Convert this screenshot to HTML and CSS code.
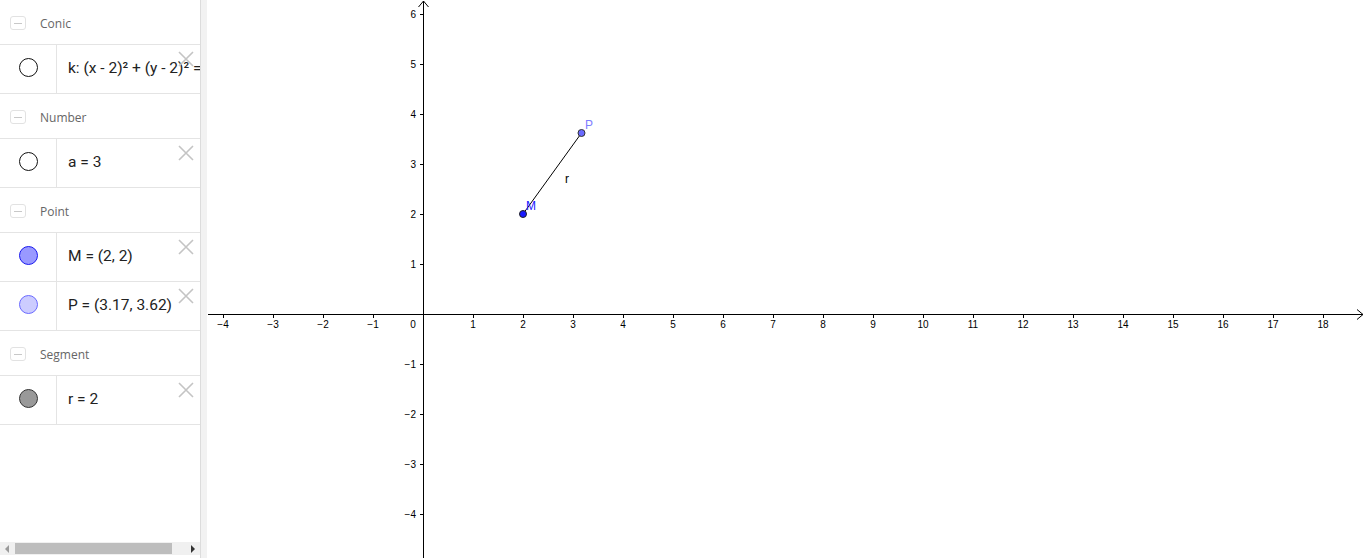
FILE: index.html
```html
<!DOCTYPE html>
<html>
<head>
<meta charset="utf-8">
<link rel="stylesheet" href="styles.css">
</head>
<body>
<div class="app">
  <aside class="panel">
    <div class="list">
      <div class="group-head"><span class="toggle"><span class="toggle-bar"></span></span><span class="group-name">Conic</span></div>
      <div class="item">
        <div class="marker"><span class="dot dot-empty"></span></div>
        <div class="formula">k: (x - 2)² + (y - 2)² = 9</div>
        <span class="del"><svg width="16" height="16" viewBox="0 0 16 16"><path d="M1 1L15 15M15 1L1 15" stroke="#c4c4c4" stroke-width="1.6" fill="none"/></svg></span>
      </div>
      <div class="group-head"><span class="toggle"><span class="toggle-bar"></span></span><span class="group-name">Number</span></div>
      <div class="item">
        <div class="marker"><span class="dot dot-empty"></span></div>
        <div class="formula">a = 3</div>
        <span class="del"><svg width="16" height="16" viewBox="0 0 16 16"><path d="M1 1L15 15M15 1L1 15" stroke="#c4c4c4" stroke-width="1.6" fill="none"/></svg></span>
      </div>
      <div class="group-head"><span class="toggle"><span class="toggle-bar"></span></span><span class="group-name">Point</span></div>
      <div class="item">
        <div class="marker"><span class="dot dot-m"></span></div>
        <div class="formula">M = (2, 2)</div>
        <span class="del"><svg width="16" height="16" viewBox="0 0 16 16"><path d="M1 1L15 15M15 1L1 15" stroke="#c4c4c4" stroke-width="1.6" fill="none"/></svg></span>
      </div>
      <div class="item">
        <div class="marker"><span class="dot dot-p"></span></div>
        <div class="formula">P = (3.17, 3.62)</div>
        <span class="del"><svg width="16" height="16" viewBox="0 0 16 16"><path d="M1 1L15 15M15 1L1 15" stroke="#c4c4c4" stroke-width="1.6" fill="none"/></svg></span>
      </div>
      <div class="group-head"><span class="toggle"><span class="toggle-bar"></span></span><span class="group-name">Segment</span></div>
      <div class="item">
        <div class="marker"><span class="dot dot-r"></span></div>
        <div class="formula">r = 2</div>
        <span class="del"><svg width="16" height="16" viewBox="0 0 16 16"><path d="M1 1L15 15M15 1L1 15" stroke="#c4c4c4" stroke-width="1.6" fill="none"/></svg></span>
      </div>
    </div>
    <div class="hscroll">
      <span class="arrow arrow-left"></span>
      <span class="thumb"></span>
      <span class="arrow arrow-right"></span>
    </div>
  </aside>
  <div class="splitter"></div>
  <main class="graphics">
    <svg class="plot" width="1159" height="558" viewBox="207 0 1159 558">
      <g stroke="#000" stroke-width="1" fill="none">
        <line x1="208" y1="314.5" x2="1363" y2="314.5"/>
        <polyline points="1357,309.5 1363,314.5 1357,319.5"/>
        <line x1="423.5" y1="558" x2="423.5" y2="1"/>
        <polyline points="418.5,7 423.5,1 428.5,7"/>
      </g>
      <g id="xticks" stroke="#000" stroke-width="1"></g>
      <g id="yticks" stroke="#000" stroke-width="1"></g>
      <g class="axis-labels" id="xlabels" text-anchor="middle"></g>
      <g class="axis-labels" id="ylabels" text-anchor="end"></g>
      <text class="axis-labels" x="413" y="328" text-anchor="middle">0</text>
      <line x1="523" y1="214" x2="581.5" y2="133" stroke="#000" stroke-width="1"/>
      <circle cx="523" cy="214" r="3.5" fill="#1a1aff" stroke="#222" stroke-width="1"/>
      <circle cx="581.5" cy="133" r="3.5" fill="#6a6aff" stroke="#333" stroke-width="1"/>
      <text class="pt-label lbl-m" x="526" y="210">M</text>
      <text class="pt-label lbl-p" x="585" y="129">P</text>
      <text class="pt-label lbl-r" x="565" y="183">r</text>
    </svg>
  </main>
</div>
<script src="script.js"></script>
</body>
</html>
```
FILE: script.js
```js
(function () {
  var NS = "http://www.w3.org/2000/svg";
  var ox = 423, oy = 314, u = 50;
  var xt = document.getElementById("xticks");
  var yt = document.getElementById("yticks");
  var xl = document.getElementById("xlabels");
  var yl = document.getElementById("ylabels");
  function el(name, attrs, text) {
    var e = document.createElementNS(NS, name);
    for (var k in attrs) e.setAttribute(k, attrs[k]);
    if (text !== undefined) e.textContent = text;
    return e;
  }
  function fmt(n) { return n < 0 ? "\u2212" + (-n) : String(n); }
  for (var i = -4; i <= 18; i++) {
    if (i === 0) continue;
    var x = ox + i * u + 0.5;
    xt.appendChild(el("line", { x1: x, y1: oy, x2: x, y2: oy + 4 }));
    xl.appendChild(el("text", { x: ox + i * u, y: oy + 14 }, fmt(i)));
  }
  for (var j = -4; j <= 6; j++) {
    if (j === 0) continue;
    var y = oy - j * u + 0.5;
    yt.appendChild(el("line", { x1: ox - 3, y1: y, x2: ox, y2: y }));
    yl.appendChild(el("text", { x: ox - 7, y: oy - j * u + 3.5 }, fmt(j)));
  }
})();
```
FILE: styles.css
```css
html, body {
  margin: 0;
  padding: 0;
  background: #fff;
  overflow: hidden;
}
.app {
  display: flex;
  width: 1366px;
  height: 558px;
}
.panel {
  width: 200px;
  flex: 0 0 200px;
  display: flex;
  flex-direction: column;
  overflow: hidden;
  background: #fff;
  font-family: "Open Sans", sans-serif;
}
.list {
  flex: 1;
  overflow: hidden;
}
.group-head {
  border-bottom: 1px solid #e4e4e4;
  display: flex;
  align-items: center;
  box-sizing: content-box;
  padding-top: 2px;
  height: 42px;
}
.toggle {
  width: 14px;
  height: 12px;
  margin-left: 10px;
  border: 1px solid #e2e2e2;
  border-radius: 3px;
  display: flex;
  align-items: center;
  justify-content: center;
}
.toggle-bar {
  width: 8px;
  height: 1px;
  background: #c8c8c8;
}
.group-name {
  margin-left: 14px;
  font-size: 12px;
  color: #666;
}
.item {
  position: relative;
  height: 48px;
  border-bottom: 1px solid #e4e4e4;
  display: flex;
  align-items: stretch;
}
.marker {
  width: 56px;
  flex: 0 0 56px;
  border-right: 1px solid #e4e4e4;
  display: flex;
  align-items: center;
  justify-content: center;
}
.dot {
  width: 17px;
  height: 17px;
  border-radius: 50%;
  border: 1px solid #000;
  box-sizing: content-box;
  margin-top: -3px;
}
.dot-empty { background: #fff; border-color: #111; }
.dot-m { background: #9999ff; border-color: #1a1aee; }
.dot-p { background: #ccccff; border-color: #6a6aff; }
.dot-r { background: #999; border-color: #333; }
.formula {
  padding-left: 11px;
  display: flex;
  align-items: center;
  white-space: nowrap;
  font-family: "Roboto", sans-serif;
  font-size: 15.5px;
  color: #222;
  margin-top: -3px;
}
.del {
  position: absolute;
  top: 6px;
  right: 6px;
  width: 16px;
  height: 16px;
}
.del svg { display: block; }
.hscroll {
  height: 13px;
  margin-bottom: 3px;
  background: #f0f0f0;
  position: relative;
  display: flex;
  align-items: center;
}
.thumb {
  position: absolute;
  left: 15px;
  width: 157px;
  top: 1px;
  height: 11px;
  background: #bdbdbd;
}
.arrow {
  position: absolute;
  top: 3px;
  width: 0;
  height: 0;
  border-top: 4px solid transparent;
  border-bottom: 4px solid transparent;
}
.arrow-left { left: 5px; border-right: 4px solid #9a9a9a; }
.arrow-right { left: 191px; border-left: 4px solid #333; }
.splitter {
  width: 6px;
  flex: 0 0 6px;
  background: #f2f2f2;
  border-left: 1px solid #dcdcdc;
}
.graphics {
  flex: 1;
  overflow: hidden;
}
.plot { display: block; }
.axis-labels {
  font-family: "Liberation Sans", Arial, sans-serif;
  font-size: 10px;
  fill: #000;
}
.pt-label {
  font-family: "Liberation Sans", Arial, sans-serif;
  font-size: 12px;
}
.lbl-m { fill: #1a1aff; }
.lbl-p { fill: #7d7dff; }
.lbl-r { fill: #000; }
```
